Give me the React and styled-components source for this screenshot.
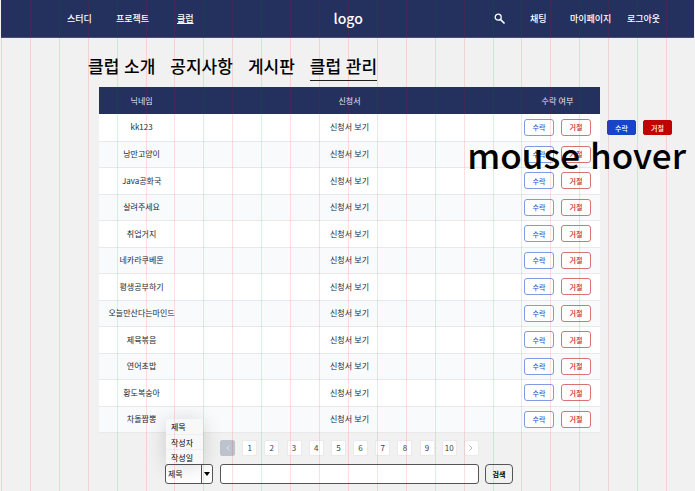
import React from "react";
import styled, { createGlobalStyle, css } from "styled-components";

const GlobalStyle = createGlobalStyle`
  *, *::before, *::after { box-sizing: border-box; }
  body {
    margin: 0;
    background: #f1f1f1;
    color: #000;
    font-family: "Noto Sans CJK KR", sans-serif;
  }
  button, input, select { font-family: inherit; }
  a { color: inherit; text-decoration: none; }
`;

const Page = styled.div`
  position: relative;
  min-height: 100vh;
  padding: 0 1px;
  overflow: hidden;
`;

const ColumnGuides = styled.div`
  position: absolute;
  inset: 0 0 0 1px;
  z-index: 5;
  display: grid;
  grid-template-columns: repeat(24, 1fr);
  pointer-events: none;
`;

const Guide = styled.span`
  border-left: 1px solid rgba(255, 0, 0, 0.12);
`;

const Header = styled.header`
  display: grid;
  grid-template-columns: 1fr auto 1fr;
  align-items: center;
  height: 38px;
  padding: 0 34px 0 66px;
  border-bottom: 1px solid #474f74;
  background: #24305e;
  color: #fff;
`;

const Nav = styled.nav`
  display: grid;
  align-items: center;
  grid-template-columns: ${(p) => (p.$end ? "36px 40px 57px auto" : "49px 61px auto")};
  justify-content: ${(p) => (p.$end ? "end" : "start")};
  font-size: 9px;
  font-weight: 500;
  line-height: 12px;
  white-space: nowrap;
`;

const NavLink = styled.a`
  ${(p) => p.$active && css`text-decoration: underline;`}
`;

const Logo = styled.a`
  margin-left: -30px;
  padding-bottom: 2px;
  font-size: 14px;
  font-weight: 500;
  line-height: 20px;
`;

const IconButton = styled.button`
  display: flex;
  width: 12px;
  padding: 0;
  border: 0;
  background: none;
  color: #fff;
`;

const Tabs = styled.nav`
  display: flex;
  gap: 15px;
  padding: 15px 0 0 87px;
`;

const Tab = styled.a`
  height: 28px;
  border-bottom: 1px solid ${(p) => (p.$active ? "#222" : "transparent")};
  font-size: 17px;
  font-weight: 500;
  line-height: 26px;
  white-space: nowrap;
`;

const Content = styled.main`
  display: grid;
  grid-template-columns: minmax(0, 501fr) minmax(0, 94fr);
  padding: 6px 0 0 98px;
`;

const Table = styled.table`
  width: 100%;
  border-collapse: collapse;
  table-layout: fixed;
  font-size: 8px;
  line-height: 12px;
  text-align: center;
  white-space: nowrap;
`;

const HeadCell = styled.th`
  width: ${(p) => p.$width};
  height: 27px;
  padding: 0;
  background: #24305e;
  color: #e4e6ee;
  font-weight: 400;
`;

const Row = styled.tr`
  height: 27px;
  background: #fff;
  &:nth-child(even) {
    height: 26px;
    background: #f9fafc;
  }
`;

const Cell = styled.td`
  padding: 0;
  border-bottom: 1px solid #e8e9eb;
  color: #212b36;
`;

const ButtonPair = styled.div`
  display: flex;
  justify-content: center;
  gap: 7px;
`;

const tones = {
  accept: { solid: "#1645c9", line: "#8399e2", text: "#3357d0" },
  reject: { solid: "#c00000", line: "#d77373", text: "#c52222" },
};

const ActionButton = styled.button`
  width: ${(p) => (p.$filled ? "29px" : "30px")};
  height: ${(p) => (p.$filled ? "15px" : "17px")};
  padding: 0;
  border: 1px solid ${(p) => tones[p.$tone][p.$filled ? "solid" : "line"]};
  border-radius: ${(p) => (p.$filled ? "2px" : "3px")};
  background: ${(p) => (p.$filled ? tones[p.$tone].solid : "#fff")};
  color: ${(p) => (p.$filled ? "#fff" : tones[p.$tone].text)};
  font-size: 7px;
  font-weight: 500;
  line-height: 12px;
`;

const HoverSample = styled.aside`
  position: relative;
  padding: 33px 0 0 7px;
  ${ButtonPair} { justify-content: flex-start; }
`;

const HoverCaption = styled.p`
  position: absolute;
  z-index: 6;
  top: 43px;
  right: 8px;
  margin: 0;
  font-size: 35px;
  font-weight: 500;
  line-height: 48px;
  white-space: nowrap;
`;

const Footer = styled.footer`
  display: grid;
  grid-template-columns: 49px 259px 28px;
  column-gap: 6px;
  row-gap: 8px;
  justify-content: start;
  padding: 7px 0 0 164px;
`;

const Pagination = styled.nav`
  grid-column: 2;
  display: flex;
  justify-content: space-between;
`;

const PageButton = styled.button`
  display: flex;
  align-items: center;
  justify-content: center;
  width: 15px;
  height: 16px;
  padding: 0;
  border: 1px solid ${(p) => (p.$muted ? "#bcc3cc" : "#e9eaec")};
  border-radius: 2px;
  background: ${(p) => (p.$muted ? "#bcc3cc" : "#fff")};
  color: ${(p) => (p.$muted ? "#e3e7ed" : "#37414d")};
  font-size: 8px;
  line-height: 12px;
`;

const Picker = styled.div`
  position: relative;
  grid-column: 1;
  width: 48px;
  height: 20px;
`;

const Select = styled.select`
  display: block;
  width: 100%;
  height: 100%;
  padding: 0 0 0 2px;
  border: 1px solid #555;
  border-radius: 3px;
  appearance: none;
  background: #fff;
  color: #111;
  font-size: 8px;
  line-height: 12px;
`;

const Arrow = styled.span`
  position: absolute;
  inset: 1px 1px 1px auto;
  display: flex;
  align-items: center;
  justify-content: center;
  width: 11px;
  border-left: 1px solid #555;
  pointer-events: none;
`;

const Options = styled.ul`
  position: absolute;
  bottom: 20px;
  left: 1px;
  width: 37px;
  margin: 0;
  padding: 0;
  border-radius: 2px;
  background: #f8f8f8;
  box-shadow: 0 2px 20px rgba(0, 0, 0, 0.16);
  list-style: none;
  font-size: 8px;
  line-height: 15px;
`;

const Option = styled.li`
  height: 15px;
  padding-left: 5px;
  & + & { border-top: 1px solid #efefef; }
`;

const SearchInput = styled.input`
  width: 100%;
  height: 20px;
  padding: 0 6px;
  border: 1px solid #555;
  border-radius: 3px;
  background: #fff;
  font-size: 8px;
`;

const SearchButton = styled.button`
  height: 20px;
  padding: 0;
  border: 1px solid #555;
  border-radius: 4px;
  background: #f1f1f1;
  color: #000;
  font-size: 7px;
  font-weight: 700;
`;

const members = [
  "kk123", "낭만고양이", "Java공화국", "살려주세요", "취업거지", "네카라쿠베몬",
  "평생공부하기", "오늘만산다는마인드", "제육볶음", "연어초밥", "황도복숭아", "차돌짬뽕",
];
const fields = ["제목", "작성자", "작성일"];
const tabs = ["클럽 소개", "공지사항", "게시판", "클럽 관리"];

function Decision({ filled }) {
  return (
    <ButtonPair>
      <ActionButton type="button" $tone="accept" $filled={filled}>수락</ActionButton>
      <ActionButton type="button" $tone="reject" $filled={filled}>거절</ActionButton>
    </ButtonPair>
  );
}

function Chevron({ left }) {
  return (
    <svg width="6" height="8" viewBox="0 0 6 8" fill="none" stroke={left ? "#e3e7ed" : "#b4bac2"} aria-hidden="true">
      <path d={left ? "M4.5 1.5 2 4l2.5 2.5" : "M1.5 1.5 4 4 1.5 6.5"} />
    </svg>
  );
}

export default function App() {
  return (
    <Page lang="ko">
      <GlobalStyle />
      <ColumnGuides aria-hidden="true">
        {Array.from({ length: 24 }, (_, i) => <Guide key={i} />)}
      </ColumnGuides>
      <Header>
        <Nav aria-label="메뉴">
          <NavLink href="#study">스터디</NavLink>
          <NavLink href="#project">프로젝트</NavLink>
          <NavLink href="#club" $active>클럽</NavLink>
        </Nav>
        <Logo href="#home">logo</Logo>
        <Nav $end aria-label="계정">
          <IconButton type="button" aria-label="검색">
            <svg width="12" height="12" viewBox="0 0 12 12" fill="none" stroke="currentColor" aria-hidden="true">
              <circle cx="4.2" cy="4.2" r="3" strokeWidth="1.3" />
              <path d="m6.4 6.4 4.1 4.1" strokeWidth="1.6" />
            </svg>
          </IconButton>
          <NavLink href="#chat">채팅</NavLink>
          <NavLink href="#mypage">마이페이지</NavLink>
          <NavLink href="#logout">로그아웃</NavLink>
        </Nav>
      </Header>
      <Tabs aria-label="클럽">
        {tabs.map((t, i) => <Tab key={t} href="#tab" $active={i === 3}>{t}</Tab>)}
      </Tabs>
      <Content>
        <Table>
          <thead>
            <tr>
              <HeadCell $width="17%">닉네임</HeadCell>
              <HeadCell $width="66%">신청서</HeadCell>
              <HeadCell $width="17%">수락 여부</HeadCell>
            </tr>
          </thead>
          <tbody>
            {members.map((name) => (
              <Row key={name}>
                <Cell>{name}</Cell>
                <Cell><a href="#application">신청서 보기</a></Cell>
                <Cell><Decision /></Cell>
              </Row>
            ))}
          </tbody>
        </Table>
        <HoverSample>
          <Decision filled />
          <HoverCaption>mouse hover</HoverCaption>
        </HoverSample>
      </Content>
      <Footer>
        <Pagination aria-label="페이지">
          <PageButton type="button" $muted aria-label="이전"><Chevron left /></PageButton>
          {Array.from({ length: 10 }, (_, i) => (
            <PageButton key={i} type="button">{i + 1}</PageButton>
          ))}
          <PageButton type="button" aria-label="다음"><Chevron /></PageButton>
        </Pagination>
        <Picker>
          <Select aria-label="검색 조건" defaultValue="제목">
            {fields.map((f) => <option key={f}>{f}</option>)}
          </Select>
          <Arrow>
            <svg width="6" height="4" viewBox="0 0 6 4" aria-hidden="true"><path d="M0 0h6L3 4z" /></svg>
          </Arrow>
          <Options>
            {fields.map((f) => <Option key={f}>{f}</Option>)}
          </Options>
        </Picker>
        <SearchInput type="search" aria-label="검색어" />
        <SearchButton type="submit">검색</SearchButton>
      </Footer>
    </Page>
  );
}
